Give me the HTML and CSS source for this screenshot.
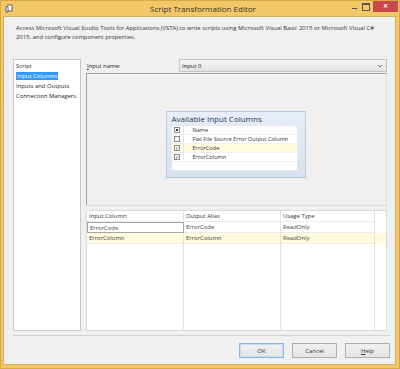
FILE: index.html
```html
<!DOCTYPE html>
<html lang="en">
<head>
    <meta charset="UTF-8">
    <title>Script Transformation Editor</title>
    <link rel="stylesheet" href="styles.css">
</head>
<body>
    <div class="window">
        <div class="titlebar">
            <div class="app-icon">
                <svg width="8" height="9" viewBox="0 0 8 9"><path d="M2 1h5v6H1.5V2.5" fill="#fff" stroke="#444" stroke-width="0.8"/><path d="M1 2.5h2v5.5H1z" fill="#fff" stroke="#444" stroke-width="0.8"/></svg>
            </div>
            <div class="title">Script Transformation Editor</div>
            <div class="controls">
                <span class="ctl min"></span>
                <span class="ctl max"></span>
                <span class="ctl close">&#x2715;</span>
            </div>
        </div>

        <div class="content">
            <div class="description">
                Access Microsoft Visual Studio Tools for Applications (VSTA) to write scripts using Microsoft Visual Basic 2015 or Microsoft Visual C# 2015, and configure component properties.
            </div>

            <div class="main">
                <ul class="nav">
                    <li>Script</li>
                    <li><span class="selected">Input Columns</span></li>
                    <li>Inputs and Outputs</li>
                    <li>Connection Managers</li>
                </ul>

                <div class="page">
                    <div class="input-row">
                        <label class="input-label"><u>I</u>nput name:</label>
                        <div class="dropdown">
                            <span>Input 0</span>
                            <svg width="6" height="4" viewBox="0 0 6 4"><path d="M1 1l2 2 2-2" fill="none" stroke="#555" stroke-width="0.8"/></svg>
                        </div>
                    </div>

                    <div class="designer">
                        <div class="columns-box">
                            <div class="columns-title">Available Input Columns</div>
                            <div class="columns-list">
                                <div class="col-row header">
                                    <span class="check-cell"><span class="check partial"></span></span>
                                    <span class="col-name">Name</span>
                                </div>
                                <div class="col-row">
                                    <span class="check-cell"><span class="check"></span></span>
                                    <span class="col-name">Flat File Source Error Output Column</span>
                                </div>
                                <div class="col-row current">
                                    <span class="check-cell"><span class="check checked">&#x2713;</span></span>
                                    <span class="col-name">ErrorCode</span>
                                </div>
                                <div class="col-row">
                                    <span class="check-cell"><span class="check checked">&#x2713;</span></span>
                                    <span class="col-name">ErrorColumn</span>
                                </div>
                            </div>
                        </div>
                    </div>

                    <div class="grid">
                        <div class="grid-row grid-head">
                            <span class="cell c1">Input Column</span>
                            <span class="cell c2">Output Alias</span>
                            <span class="cell c3">Usage Type</span>
                        </div>
                        <div class="grid-row">
                            <span class="cell c1 focused">ErrorCode</span>
                            <span class="cell c2">ErrorCode</span>
                            <span class="cell c3">ReadOnly</span>
                        </div>
                        <div class="grid-row current">
                            <span class="cell c1">ErrorColumn</span>
                            <span class="cell c2">ErrorColumn</span>
                            <span class="cell c3">ReadOnly</span>
                        </div>
                        <div class="grid-row filler">
                            <span class="cell c1"></span>
                            <span class="cell c2"></span>
                            <span class="cell c3"></span>
                        </div>
                    </div>
                </div>
            </div>

            <div class="footer">
                <button class="btn default">OK</button>
                <button class="btn">Cancel</button>
                <button class="btn"><u>H</u>elp</button>
            </div>
            <div class="grip"></div>
        </div>
    </div>
</body>
</html>
```

FILE: styles.css
```css
* {
    margin: 0;
    padding: 0;
    box-sizing: border-box;
}

body {
    font-family: "Open Sans", "Noto Sans", Arial, sans-serif;
    font-size: 5.9px;
    color: #222;
    background: #fff;
}

.window {
    width: 400px;
    height: 369px;
    background-color: #f3c766;
    border: 1px solid #d9aa48;
    padding: 0 3px 3px 2px;
    display: flex;
    flex-direction: column;
}

/* title bar */
.titlebar {
    height: 15px;
    display: flex;
    align-items: flex-start;
}

.app-icon {
    width: 10px;
    padding: 3px 0 0 2px;
}

.title {
    flex: 1;
    text-align: center;
    font-size: 8px;
    color: #333;
    padding-top: 2px;
    padding-left: 44px;
}

.controls {
    display: flex;
    align-items: flex-start;
    margin-right: -2px;
}

.ctl {
    width: 11px;
    height: 10px;
    position: relative;
}

.ctl.min::after {
    content: "";
    position: absolute;
    left: 3px;
    top: 7px;
    width: 5px;
    height: 1px;
    background: #555;
}

.ctl.max::after {
    content: "";
    position: absolute;
    left: 2px;
    top: 2px;
    width: 6px;
    height: 5px;
    border: 1px solid #555;
    border-top-width: 2px;
}

.ctl.close {
    width: 25px;
    height: 11px;
    margin-left: 2px;
    background: #c9474d;
    color: #fff;
    font-size: 6px;
    font-weight: bold;
    text-align: center;
    line-height: 11px;
}

/* content */
.content {
    flex: 1;
    background: #f0f0f0;
    border: 1px solid #d6b265;
    display: flex;
    flex-direction: column;
    padding: 0 8px 0 9px;
    position: relative;
}

.description {
    padding: 7px 0 0 3px;
    line-height: 9px;
    height: 42px;
    color: #333;
}

.main {
    display: flex;
    gap: 5px;
    height: 272px;
}

.nav {
    list-style: none;
    width: 68px;
    background: #fff;
    border: 1px solid #c8c8c8;
    padding: 1px 2px;
    line-height: 10px;
}

.nav .selected {
    background: #3399ff;
    color: #fff;
    padding: 0 1px;
}

.page {
    flex: 1;
    display: flex;
    flex-direction: column;
}

.input-row {
    display: flex;
    justify-content: space-between;
    align-items: center;
    height: 13px;
}

.input-label {
    padding-left: 1px;
}

.dropdown {
    width: 208px;
    height: 13px;
    border: 1px solid #c3c3c3;
    background: linear-gradient(#f2f2f2, #e4e4e4);
    display: flex;
    justify-content: space-between;
    align-items: center;
    padding: 0 3px 0 2px;
}

.designer {
    margin-top: 1px;
    height: 133px;
    border: 1px solid #a0a0a0;
    border-bottom-color: #dcdcdc;
    border-right-color: #dcdcdc;
    background: #f0f0f0;
    display: flex;
    justify-content: center;
    padding-top: 37px;
}

.columns-box {
    width: 140px;
    height: 67px;
    margin-right: 2px;
    border: 1px solid #b8c8dc;
    background: linear-gradient(#e6eef8, #d7e2f0);
    padding: 0 7px 0 4px;
}

.columns-title {
    font-size: 8px;
    color: #1e395b;
    height: 13px;
    line-height: 13px;
    padding-left: 1px;
}

.columns-list {
    background: #fff;
    height: 46px;
    border: 1px solid #e3e8ef;
}

.col-row {
    display: flex;
    height: 9px;
    line-height: 9px;
    font-size: 5.6px;
    border-bottom: 1px solid #f0f0f0;
}

.col-row.current {
    background: #fffbdc;
}

.check-cell {
    width: 12px;
    border-right: 1px solid #e6e6e6;
    display: flex;
    align-items: center;
    justify-content: center;
}

.col-name {
    padding-left: 9px;
    color: #333;
}

.check {
    width: 6px;
    height: 6px;
    border: 1px solid #8a8a8a;
    background: #fff;
    font-size: 5px;
    line-height: 4px;
    text-align: center;
    color: #222;
}

.check.partial {
    box-shadow: inset 0 0 0 1px #fff, inset 0 0 0 3px #333;
}

.grid {
    margin-top: 4px;
    flex: 1;
    background: #fff;
    border: 1px solid #dadada;
    display: flex;
    flex-direction: column;
}

.grid-row {
    display: flex;
    height: 11px;
    line-height: 10px;
}

.grid-row.current {
    background: #fffbdc;
}

.grid-row.filler {
    flex: 1;
}

.grid-head .cell {
    color: #333;
}

.cell {
    border-right: 1px solid #e2e2e2;
    border-bottom: 1px solid #ececec;
    padding-left: 2px;
    color: #444;
}

.c1 {
    width: 97px;
}

.c2 {
    width: 97px;
}

.c3 {
    width: 94px;
}

.cell.focused {
    border: 1px solid #a7a7a7;
}

.filler .cell {
    border-bottom: none;
}

/* footer */
.footer {
    margin-top: 4px;
    border-top: 1px solid #d0d0d0;
    display: flex;
    justify-content: flex-end;
    gap: 8px;
    padding: 7px 0 0 0;
    margin-right: -3px;
}

.btn {
    width: 45px;
    height: 15px;
    font-family: inherit;
    font-size: 6px;
    color: #333;
    border: 1px solid #adadad;
    background: linear-gradient(#f0f0f0, #e5e5e5);
}

.btn.default {
    border-color: #8cb4e6;
    box-shadow: inset 0 0 0 1px #c6dcf5;
}

.grip {
    position: absolute;
    right: 1px;
    bottom: 1px;
    width: 4px;
    height: 4px;
    background: radial-gradient(circle, #aaa 30%, transparent 40%) 0 0 / 2px 2px;
}
```
